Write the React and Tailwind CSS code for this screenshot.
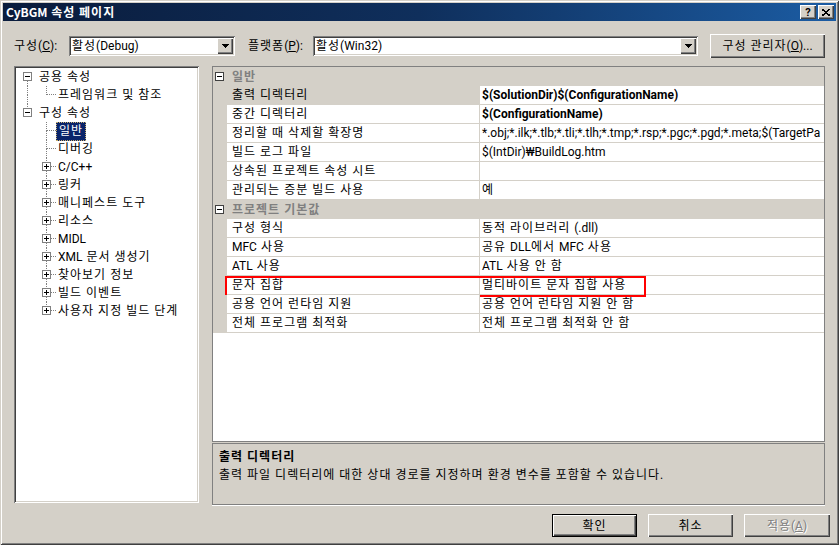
import React from "react";

const RAISED =
  "shadow-[inset_1px_1px_0_#ffffff,inset_-1px_-1px_0_#404040,inset_-2px_-2px_0_#808080]";
const SUNKEN =
  "shadow-[inset_1px_1px_0_#808080,inset_-1px_-1px_0_#ffffff,inset_2px_2px_0_#404040,inset_-2px_-2px_0_#d4d0c8]";

// Widen Hangul runs slightly so they match the reference's glyph pitch
function t(str) {
  if (!str) return str;
  const parts = str.split(/([\uAC00-\uD7A3\u3131-\u318E ]+)/);
  return parts.map((p, i) =>
    /[\uAC00-\uD7A3\u3131-\u318E]/.test(p) ? (
      <span key={i} className="tracking-[1px]">
        {p}
      </span>
    ) : (
      <React.Fragment key={i}>{p}</React.Fragment>
    )
  );
}

function Cell({ up, down, right, box }) {
  return (
    <svg width="19" height="18" className="shrink-0" shapeRendering="crispEdges">
      {up && <line x1="9.5" y1="0" x2="9.5" y2="9" stroke="#808080" strokeDasharray="1 1" />}
      {down && <line x1="9.5" y1="9" x2="9.5" y2="18" stroke="#808080" strokeDasharray="1 1" />}
      {right && <line x1="10" y1="8.5" x2="19" y2="8.5" stroke="#808080" strokeDasharray="1 1" />}
      {box && (
        <g>
          <rect x="5.5" y="4.5" width="8" height="8" fill="#ffffff" stroke="#808080" />
          <line x1="7" y1="8.5" x2="12" y2="8.5" stroke="#000000" />
          {box === "plus" && <line x1="9.5" y1="6" x2="9.5" y2="11" stroke="#000000" />}
        </g>
      )}
    </svg>
  );
}

function TreeRow({ cells, label, selected }) {
  return (
    <div className="flex h-[18px] items-center">
      {cells.map((c, i) => (
        <Cell key={i} {...c} />
      ))}
      <span
        className={
          selected
            ? "px-[3px] leading-[19px] bg-[#0a246a] text-white outline-1 outline-dotted outline-[#c8b070] -outline-offset-1 whitespace-nowrap"
            : "ml-[1px] px-[1px] pt-[1px] leading-[17px] text-black whitespace-nowrap"
        }
      >
        {t(label)}
      </span>
    </div>
  );
}

const childMid = { up: true, down: true, right: true };
const childPlus = { up: true, down: true, right: true, box: "plus" };

function Tree() {
  return (
    <div className={`w-[185px] h-[437px] bg-white ${SUNKEN} pl-[4px] pt-[2px] overflow-hidden`}>
      <TreeRow cells={[{ box: "minus", down: true }]} label="공용 속성" />
      <TreeRow cells={[{ up: true, down: true }, { up: true, right: true }]} label="프레임워크 및 참조" />
      <TreeRow cells={[{ up: true, box: "minus" }]} label="구성 속성" />
      <TreeRow cells={[{}, childMid]} label="일반" selected />
      <TreeRow cells={[{}, childMid]} label="디버깅" />
      <TreeRow cells={[{}, childPlus]} label="C/C++" />
      <TreeRow cells={[{}, childPlus]} label="링커" />
      <TreeRow cells={[{}, childPlus]} label="매니페스트 도구" />
      <TreeRow cells={[{}, childPlus]} label="리소스" />
      <TreeRow cells={[{}, childPlus]} label="MIDL" />
      <TreeRow cells={[{}, childPlus]} label="XML 문서 생성기" />
      <TreeRow cells={[{}, childPlus]} label="찾아보기 정보" />
      <TreeRow cells={[{}, childPlus]} label="빌드 이벤트" />
      <TreeRow cells={[{}, { up: true, right: true, box: "plus" }]} label="사용자 지정 빌드 단계" />
    </div>
  );
}

function GroupRow({ label }) {
  return (
    <div className="flex h-[19px] items-center bg-[#d4d0c8] pl-[2px]">
      <svg width="9" height="9" className="shrink-0" shapeRendering="crispEdges">
        <rect x="0.5" y="0.5" width="8" height="8" fill="#ffffff" stroke="#404040" />
        <line x1="2" y1="4.5" x2="7" y2="4.5" stroke="#000000" />
      </svg>
      <span className="ml-[8px] pt-[1px] font-bold text-[#808080] leading-[18px]">{t(label)}</span>
    </div>
  );
}

function PropRow({ name, value, bold, selected, marked }) {
  return (
    <div className="relative flex h-[19px]">
      <div className="w-[14px] shrink-0 bg-[#d4d0c8]" />
      <div
        className={
          selected
            ? "w-[253px] shrink-0 border-b border-r border-[#d4d0c8] bg-[#d4d0c8] pl-[5px] pt-[1px] leading-[17px] whitespace-nowrap overflow-hidden"
            : "w-[253px] shrink-0 border-b border-r border-[#d4d0c8] bg-white pl-[5px] pt-[1px] leading-[17px] whitespace-nowrap overflow-hidden"
        }
      >
        {t(name)}
      </div>
      <div
        className={
          bold
            ? "flex-1 min-w-0 border-b border-[#d4d0c8] pl-[2px] pt-[1px] leading-[17px] whitespace-nowrap overflow-hidden font-bold"
            : "flex-1 min-w-0 border-b border-[#d4d0c8] pl-[2px] pt-[1px] leading-[17px] whitespace-nowrap overflow-hidden"
        }
      >
        {t(value)}
      </div>
      {marked && (
        <div className="absolute left-[12px] top-0 w-[421px] h-[21px] border-2 border-[#ff0000] pointer-events-none" />
      )}
    </div>
  );
}

function Grid() {
  return (
    <div className="h-[376px] border border-[#808080] bg-white overflow-hidden">
      <GroupRow label="일반" />
      <PropRow name="출력 디렉터리" value="$(SolutionDir)$(ConfigurationName)" bold selected />
      <PropRow name="중간 디렉터리" value="$(ConfigurationName)" bold />
      <PropRow
        name="정리할 때 삭제할 확장명"
        value="*.obj;*.ilk;*.tlb;*.tli;*.tlh;*.tmp;*.rsp;*.pgc;*.pgd;*.meta;$(TargetPa"
      />
      <PropRow name="빌드 로그 파일" value="$(IntDir)₩BuildLog.htm" />
      <PropRow name="상속된 프로젝트 속성 시트" value="" />
      <PropRow name="관리되는 증분 빌드 사용" value="예" />
      <GroupRow label="프로젝트 기본값" />
      <PropRow name="구성 형식" value="동적 라이브러리 (.dll)" />
      <PropRow name="MFC 사용" value="공유 DLL에서 MFC 사용" />
      <PropRow name="ATL 사용" value="ATL 사용 안 함" />
      <PropRow name="문자 집합" value="멀티바이트 문자 집합 사용" marked />
      <PropRow name="공용 언어 런타임 지원" value="공용 언어 런타임 지원 안 함" />
      <PropRow name="전체 프로그램 최적화" value="전체 프로그램 최적화 안 함" />
    </div>
  );
}

function Combo({ width, text }) {
  return (
    <div className={`flex h-[20px] ${width} shrink-0 items-center bg-white ${SUNKEN} p-[2px]`}>
      <span className="flex-1 pl-[1px] pt-[1px] leading-[15px] whitespace-nowrap">{t(text)}</span>
      <div className={`flex h-[16px] w-[16px] items-center justify-center bg-[#d4d0c8] ${RAISED}`}>
        <svg width="7" height="4" shapeRendering="crispEdges">
          <polygon points="0,0 7,0 3.5,4" fill="#000000" />
        </svg>
      </div>
    </div>
  );
}

function Button({ children, width, isDefault, disabled }) {
  const inner = (
    <div
      className={`flex h-full w-full items-center justify-center bg-[#d4d0c8] ${RAISED} ${
        disabled ? "text-[#808080] [text-shadow:1px_1px_0_#ffffff]" : "text-black"
      }`}
    >
      {children}
    </div>
  );
  if (isDefault) {
    return <div className={`${width} h-[23px] border border-black`}>{inner}</div>;
  }
  return <div className={`${width} h-[23px]`}>{inner}</div>;
}

function TitleButton({ children }) {
  return (
    <div
      className={`flex h-[14px] w-[16px] items-center justify-center bg-[#d4d0c8] ${RAISED} text-[11px] font-bold leading-none text-black`}
    >
      {children}
    </div>
  );
}

export default function App() {
  return (
    <div className="relative h-[545px] w-[839px] overflow-hidden bg-[#d4d0c8] text-[12px] text-black font-['Roboto','Noto_Sans_CJK_KR',sans-serif] shadow-[inset_1px_1px_0_#d4d0c8,inset_-1px_-1px_0_#404040,inset_2px_2px_0_#ffffff,inset_-2px_-2px_0_#808080] p-[3px]">
      {/* title bar */}
      <div className="flex h-[18px] items-center bg-linear-to-r from-[#0a1c3c] via-[#0f2f5c] to-[#1b5ca3] pl-[3px] pr-[2px]">
        <span className="flex-1 font-bold text-white leading-[18px] font-['Noto_Sans_CJK_KR',sans-serif]">
          {t("CyBGM 속성 페이지")}
        </span>
        <div className="flex items-center gap-[2px]">
          <TitleButton>?</TitleButton>
          <TitleButton>
            <svg width="8" height="7" shapeRendering="crispEdges">
              <path d="M0 0 L8 7 M8 0 L0 7" stroke="#000" strokeWidth="1.6" />
            </svg>
          </TitleButton>
        </div>
      </div>

      {/* toolbar */}
      <div className="mt-[12px] flex h-[25px] items-center pl-[11px]">
        <span className="w-[55px] shrink-0 leading-[16px] whitespace-nowrap">
          {t("구성")}(<u>C</u>):
        </span>
        <Combo width="w-[166px]" text="활성(Debug)" />
        <span className="ml-[13px] w-[65px] shrink-0 leading-[16px] whitespace-nowrap">
          {t("플랫폼")}(<u>P</u>):
        </span>
        <Combo width="w-[385px]" text="활성(Win32)" />
        <div className="ml-[12px] h-[24px] w-[115px]">
          <div className={`flex h-full w-full items-center justify-center bg-[#d4d0c8] ${RAISED}`}>
            {t("구성 관리자")}(<u>O</u>)...
          </div>
        </div>
      </div>

      {/* main */}
      <div className="mt-[8px] flex h-[439px] items-start pl-[11px]">
        <Tree />
        <div className="ml-[13px] flex w-[613px] flex-col">
          <Grid />
          <div className="mt-[1px] h-[62px] border border-[#808080] shadow-[0_1px_0_#ffffff] pl-[6px] pt-[4px]">
            <div className="font-bold leading-[18px]">{t("출력 디렉터리")}</div>
            <div className="leading-[18px] whitespace-nowrap">
              {t("출력 파일 디렉터리에 대한 상대 경로를 지정하며 환경 변수를 포함할 수 있습니다.")}
            </div>
          </div>
        </div>
      </div>

      {/* buttons */}
      <div className="mt-[9px] flex justify-end gap-[11px] pr-[6px]">
        <Button width="w-[85px]" isDefault>
          {t("확인")}
        </Button>
        <Button width="w-[85px]">{t("취소")}</Button>
        <Button width="w-[86px]" disabled>
          {t("적용")}(<u>A</u>)
        </Button>
      </div>
    </div>
  );
}
